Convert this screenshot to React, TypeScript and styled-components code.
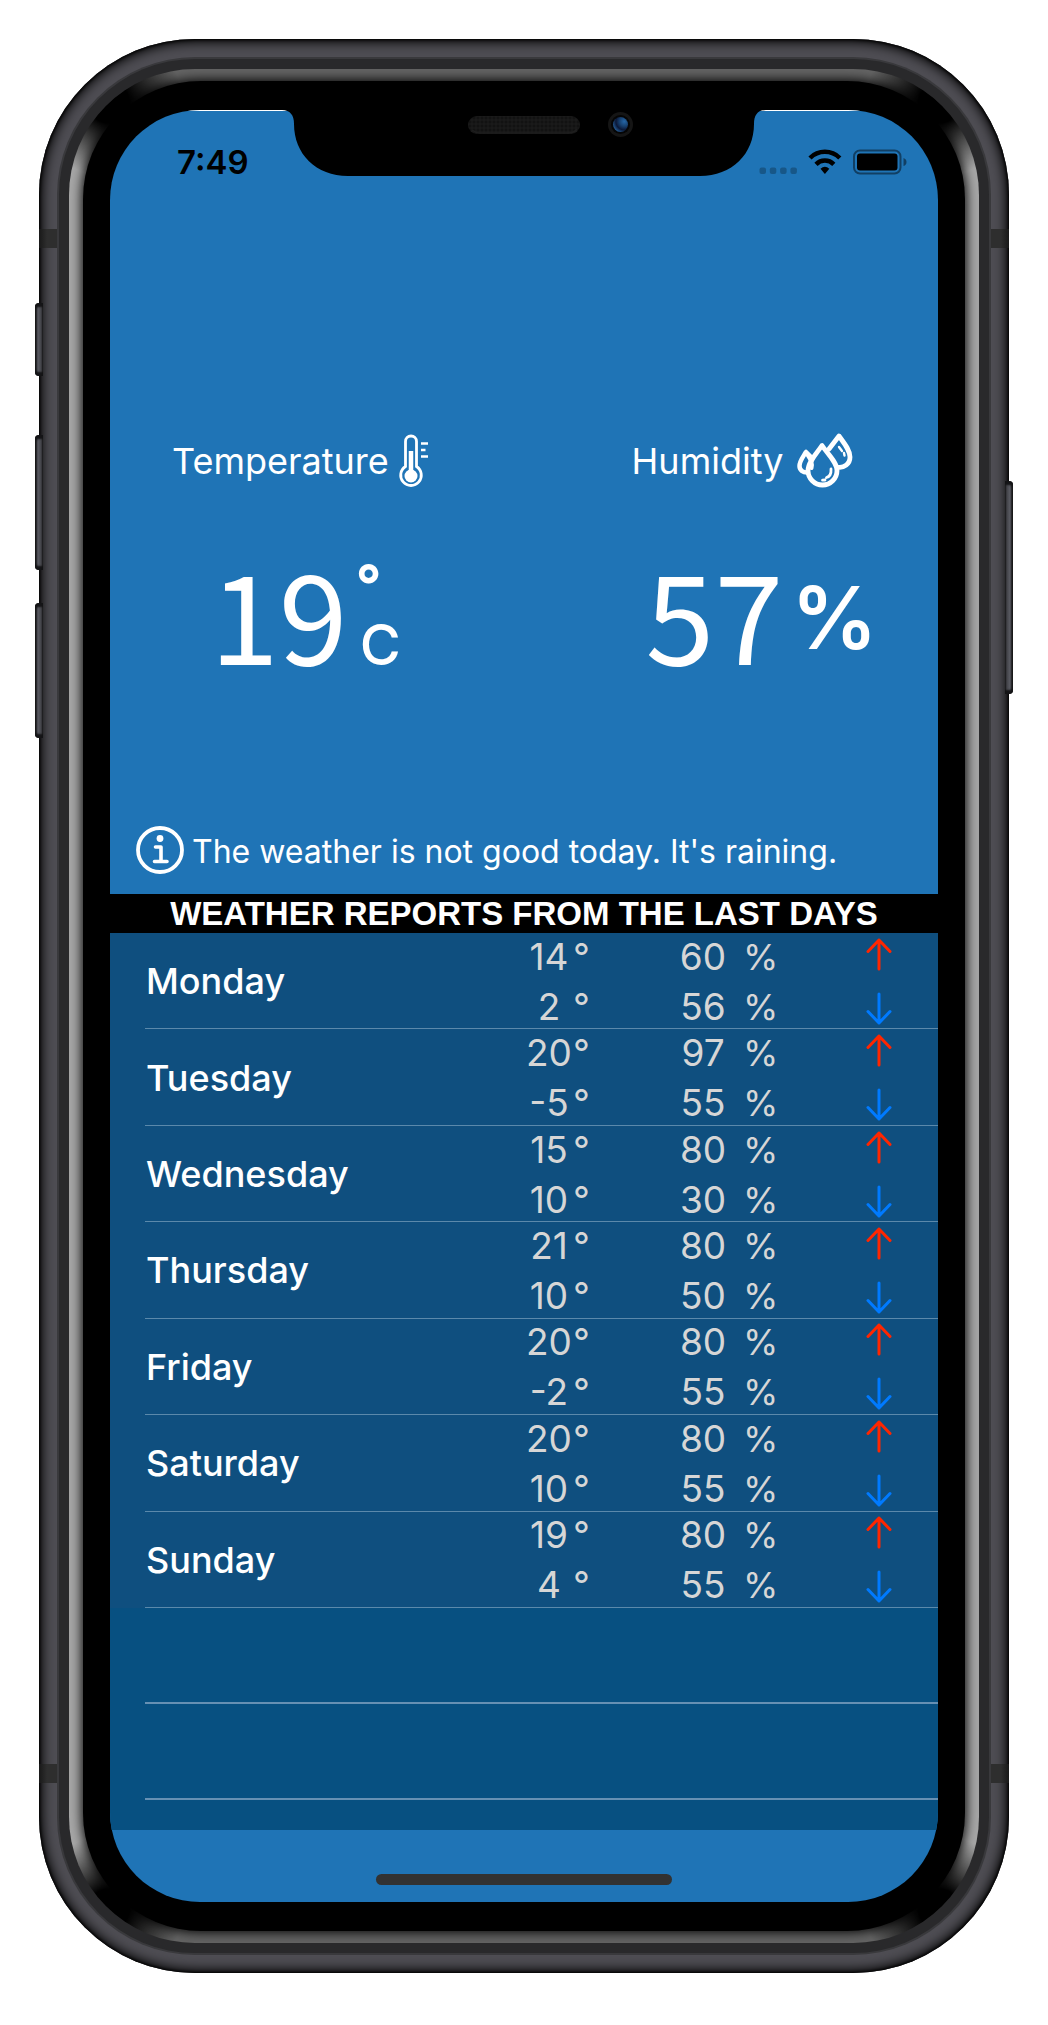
import React from "react";
import styled, { createGlobalStyle } from "styled-components";

const GlobalStyle = createGlobalStyle`
  *, *::before, *::after { box-sizing: border-box; }
  body { margin: 0; background: #fff; font-family: Inter, "Liberation Sans", sans-serif; }
`;

const Page = styled.main`
  display: flex;
  justify-content: center;
  padding: 39px 39px 52px;
`;

/* ---------- device ---------- */

const Phone = styled.div`
  position: relative;
  width: 100%;
  max-width: 970px;
`;

const Frame = styled.div`
  position: relative;
  padding: 20px;
  border-radius: 156px;
  background: #4e4d53;
  box-shadow: inset 0 0 12px 3px #000, inset 0 0 3px 1px #000;
`;

const Rim = styled.div`
  position: relative;
  padding: 10px;
  border-radius: 136px;
  background: #29292b;
  box-shadow: 0 0 0 2px #39393c;
`;

const Metal = styled.div`
  padding: 12px 14px;
  border-radius: 126px;
  overflow: hidden;
  background:
    radial-gradient(circle at 40px 34px, #000 20px, transparent 74px) left top / 116px 116px no-repeat,
    radial-gradient(circle at 76px 34px, #000 20px, transparent 74px) right top / 116px 116px no-repeat,
    radial-gradient(circle at 40px 82px, #000 20px, transparent 74px) left bottom / 116px 116px no-repeat,
    radial-gradient(circle at 76px 82px, #000 20px, transparent 74px) right bottom / 116px 116px no-repeat,
    linear-gradient(#646464, #646464) top / 100% 38px no-repeat,
    linear-gradient(#646464, #646464) bottom / 100% 38px no-repeat,
    #a6a6a6;
`;

const Glass = styled.div`
  padding: 29px 27px;
  border-radius: 118px;
  background: #000;
  box-shadow: 0 0 12px 1px #000;
`;

const Screen = styled.div`
  position: relative;
  display: flex;
  flex-direction: column;
  border-radius: 90px;
  overflow: hidden;
  background: #1f74b6;
  color: #fff;
`;

const SideButton = styled.span<{ $side: "left" | "right"; $top: number; $length: number }>`
  position: absolute;
  top: ${(p) => p.$top}px;
  ${(p) => p.$side}: -4px;
  z-index: 1;
  width: 8px;
  height: ${(p) => p.$length}px;
  border-radius: ${(p) => (p.$side === "left" ? "4px 0 0 4px" : "0 4px 4px 0")};
  background: linear-gradient(
    to ${(p) => (p.$side === "left" ? "right" : "left")},
    #1d1d1f 0 1px, #5a5b63 3px, #4b4c52 5px, #3a3a3f 7px, #1b1b1d 8px
  );
  box-shadow: inset 0 4px 2px #141416, inset 0 -4px 2px #141416;
`;

const Antenna = styled.span<{ $side: "left" | "right"; $edge: "top" | "bottom" }>`
  position: absolute;
  ${(p) => p.$edge}: 190px;
  ${(p) => p.$side}: 0;
  width: 20px;
  height: 19px;
  background: linear-gradient(to ${(p) => (p.$side === "left" ? "right" : "left")}, #181818, #2e2e2e 8px);
`;

const NotchDrawing = styled.svg`
  position: absolute;
  top: 0;
  left: 50%;
  margin-left: -242px;
  width: 484px;
  height: 67px;
`;

function Notch() {
  return (
    <NotchDrawing viewBox="0 0 484 67" aria-hidden="true">
      <defs>
        <pattern id="mesh" width="4" height="4" patternUnits="userSpaceOnUse">
          <rect width="4" height="4" fill="#121212" />
          <path d="M0 2H4M2 0V4" stroke="#1c1c1c" />
        </pattern>
        <radialGradient id="lens" cx="0.75" cy="0.3" r="0.8">
          <stop offset="0" stopColor="#2566a6" />
          <stop offset="0.4" stopColor="#17406f" />
          <stop offset="0.7" stopColor="#0b1838" />
          <stop offset="1" stopColor="#245a92" />
        </radialGradient>
      </defs>
      <path d="M0 0C8 0 12 5 12 14C12 44 34 66 66 66H418C450 66 472 44 472 14C472 5 476 0 484 0Z" fill="#000" />
      <rect x="186" y="6" width="112" height="18" rx="9" fill="url(#mesh)" />
      <path d="M190 20Q194 23 198 23H286Q292 23 295 19" fill="none" stroke="#1e1e1e" strokeWidth="1.5" />
      <circle cx="338.500" cy="14.500" r="12.500" fill="#151515" />
      <circle cx="338.500" cy="14.500" r="9.500" fill="#050505" />
      <circle cx="338.500" cy="14.500" r="7.500" fill="url(#lens)" />
    </NotchDrawing>
  );
}

/* ---------- status bar ---------- */

const StatusBar = styled.header`
  display: flex;
  justify-content: space-between;
  align-items: flex-start;
  height: 80px;
  padding: 32px 31px 0 67px;
  border-top: 1px solid #fff;
  color: #000;
`;

const Clock = styled.time`
  font-size: 33px;
  line-height: 38px;
  font-weight: 600;
`;

const StatusIcons = styled.div`
  display: flex;
  align-items: center;
  height: 38px;
`;

const StatusGlyphs = () => (
  <svg width="148" height="26" viewBox="0 0 148 26" role="img" aria-label="No signal, Wi-Fi, battery full">
    <g fillOpacity="0.25">
      {[0, 10.3, 20.6, 30.9].map((x) => (
        <rect key={x} x={x + 0.5} y="18.500" width="6.500" height="6.500" rx="2" />
      ))}
      <path d="M144.500 9Q147.500 10 147.500 13T144.500 17Z" fillOpacity="0.45" />
    </g>
    <g fill="none" stroke="#000" strokeWidth="4.500">
      <path d="M51 9A21 21 0 0 1 80.800 9" />
      <path d="M57 15.300A12.500 12.500 0 0 1 74.800 15.300" />
    </g>
    <path d="M61.500 19.700Q65.900 16 70.300 19.700L65.900 25Z" />
    <rect x="95" y="1.500" width="46.500" height="23" rx="6" fill="none" stroke="#000" strokeOpacity="0.45" strokeWidth="2" />
    <rect x="98" y="4.500" width="40.500" height="17" rx="3" />
  </svg>
);

/* ---------- current conditions ---------- */

const Today = styled.section`
  display: grid;
  grid-template-columns: 3fr 2fr;
  padding: 244px 0 0 62px;
`;

const StatLabel = styled.h2`
  display: flex;
  align-items: center;
  gap: 12px;
  margin: 0;
  height: 54px;
  font-size: 36px;
  font-weight: 400;
`;

const StatValue = styled.p<{ $indent: number }>`
  display: flex;
  margin: 0;
  padding: 63px 0 0 ${(p) => p.$indent}px;
  height: 210px;
`;

const Digits = styled.span`
  font-family: "Noto Sans CJK SC", "Noto Sans", sans-serif;
  font-size: 124px;
  line-height: 120px;
`;

const CelsiusUnit = styled.span`
  display: flex;
  flex-direction: column;
  align-items: flex-start;
  padding: 4px 0 0 8px;
`;

const Degree = styled.span`
  font-size: 56px;
  line-height: 60px;
  font-weight: 700;
`;

const Scale = styled.span`
  padding-left: 4px;
  font-size: 56px;
  line-height: 60px;
  font-weight: 500;
`;

const Percent = styled.span`
  padding-left: 8px;
  font-size: 86px;
  line-height: 134px;
  font-weight: 600;
`;

const ThermometerIcon = () => (
  <svg width="32" height="54" viewBox="14 0 32 54" fill="none" stroke="#fff" overflow="visible" aria-hidden="true">
    <path d="M18.500 32.500V7.500A5.500 5.500 0 0 1 29.500 7.500V32.500A10.300 10.300 0 1 1 18.500 32.500Z" strokeWidth="2.800" />
    <path d="M24 17V42" strokeWidth="4.500" />
    <circle cx="24" cy="42" r="6.500" fill="#fff" stroke="none" />
    <path d="M34 9.500H41M34 16H38.500M34 22.500H41" strokeWidth="2.400" />
  </svg>
);

const DropsIcon = () => (
  <svg width="58" height="56" viewBox="-2 0 58 56" fill="none" stroke="#fff" strokeLinejoin="round" strokeLinecap="round" aria-hidden="true">
    <path d="M25 12.500C20 20 11 29 11 37.500A14.500 14.500 0 0 0 40 37.500C40 29 30 20 25 12.500Z" strokeWidth="4.800" />
    <path d="M32 16L42 3C47 10 53 17 53 24C53 31 47 35.500 40 34" strokeWidth="4.800" />
    <path d="M15 25L9 19C6 24 2.500 28 2.500 33C2.500 37 6 40 11 39.500" strokeWidth="4.500" />
    <path d="M10 21C13 26 16 29 14.500 35" strokeWidth="4" />
    <path d="M34 36Q34.500 43 29.500 44.500M28 47L25.500 47.200" strokeWidth="2.800" />
    <path d="M42 14L45 18M47 20L47.500 22.500" strokeWidth="2.400" />
  </svg>
);

/* ---------- notice ---------- */

const Notice = styled.p`
  display: flex;
  align-items: flex-start;
  gap: 8px;
  margin: 0;
  padding: 128px 26px 16px;
  font-size: 32px;
  line-height: 52px;
`;

const InfoIcon = () => (
  <svg width="48" height="48" viewBox="0 0 48 48" fill="none" stroke="#fff" aria-hidden="true">
    <circle cx="24" cy="24" r="22" strokeWidth="3.800" />
    <circle cx="24" cy="12.500" r="3.400" fill="#fff" stroke="none" />
    <path d="M19.500 21H25V35.500M18.500 35.500H31" strokeWidth="3.600" strokeLinecap="round" strokeLinejoin="round" />
  </svg>
);

/* ---------- history ---------- */

const ReportTitle = styled.h1`
  margin: 0;
  background: #000;
  font-family: "Liberation Sans", Arial, sans-serif;
  font-size: 33px;
  line-height: 39px;
  font-weight: 700;
  text-align: center;
  white-space: nowrap;
`;

const History = styled.section`
  background: #075081;
`;

const ReportArea = styled.div`
  padding-left: 35px;
  background: #0f4f7f;
`;

const ReportTable = styled.table`
  width: 100%;
  height: 675px;
  table-layout: fixed;
  border-collapse: separate;
  border-spacing: 0;

  tr {
    box-shadow: inset 0 -1px #5b89ab;
  }
`;

const DayColumn = styled.col``;

const ReadingColumn = styled.col`
  width: 154px;
`;

const TrendColumn = styled.col`
  width: 105px;
`;

const DayCell = styled.th`
  padding: 0 0 0 1px;
  font-size: 36px;
  font-weight: 500;
  text-align: left;
`;

const Cell = styled.td<{ $indent?: number }>`
  padding: 0 0 0 ${(p) => p.$indent ?? 0}px;
  color: #d6d6d6;
`;

const Readings = styled.div`
  display: grid;
  gap: 6px;
  padding-top: 1px;
`;

const Reading = styled.div`
  display: flex;
  font-size: 37px;
  line-height: 44px;
`;

const Amount = styled.span`
  display: flex;
  justify-content: center;
  width: 48px;
`;

const PercentSign = styled.span`
  padding-left: 16px;
  font-size: 36px;
`;

const Trend = styled.div`
  display: flex;
  flex-direction: column;
  gap: 21px;
`;

const EmptyRow = styled.div`
  height: 96px;
  margin-left: 35px;
  border-bottom: 2px solid #6690b3;
`;

const Remainder = styled.div`
  height: 30px;
`;

const Footer = styled.footer`
  display: flex;
  justify-content: center;
  align-items: flex-end;
  height: 72px;
  padding-bottom: 17px;
`;

const HomeIndicator = styled.span`
  width: 296px;
  height: 11px;
  border-radius: 6px;
  background: #323232;
`;

const Arrow = ({ up }: { up?: boolean }) => (
  <svg width="26" height="33" viewBox="0 0 26 33" fill="none" strokeWidth="3" strokeLinecap="round" strokeLinejoin="round"
    stroke={up ? "#ff2600" : "#007aff"} role="img" aria-label={up ? "High" : "Low"}>
    <path d={up ? "M13 31V2M2 13.500L13 2L24 13.500" : "M13 2V31M2 19.500L13 31L24 19.500"} />
  </svg>
);

type Pair = [number, number];

const days: { name: string; temperature: Pair; humidity: Pair }[] = [
  { name: "Monday", temperature: [14, 2], humidity: [60, 56] },
  { name: "Tuesday", temperature: [20, -5], humidity: [97, 55] },
  { name: "Wednesday", temperature: [15, 10], humidity: [80, 30] },
  { name: "Thursday", temperature: [21, 10], humidity: [80, 50] },
  { name: "Friday", temperature: [20, -2], humidity: [80, 55] },
  { name: "Saturday", temperature: [20, 10], humidity: [80, 55] },
  { name: "Sunday", temperature: [19, 4], humidity: [80, 55] },
];

export default function App() {
  return (
    <Page>
      <GlobalStyle />
      <Phone>
        <SideButton $side="left" $top={264} $length={73} />
        <SideButton $side="left" $top={396} $length={135} />
        <SideButton $side="left" $top={564} $length={135} />
        <SideButton $side="right" $top={442} $length={213} />
        <Frame>
          <Antenna $side="left" $edge="top" />
          <Antenna $side="right" $edge="top" />
          <Antenna $side="left" $edge="bottom" />
          <Antenna $side="right" $edge="bottom" />
          <Rim>
            <Metal>
              <Glass>
                <Screen>
                  <StatusBar>
                    <Clock>7:49</Clock>
                    <StatusIcons>
                      <StatusGlyphs />
                    </StatusIcons>
                  </StatusBar>
                  <Notch />
                  <Today>
                    <div>
                      <StatLabel>
                        Temperature
                        <ThermometerIcon />
                      </StatLabel>
                      <StatValue $indent={38}>
                        <Digits>19</Digits>
                        <CelsiusUnit>
                          <Degree>°</Degree>
                          <Scale>C</Scale>
                        </CelsiusUnit>
                      </StatValue>
                    </div>
                    <div>
                      <StatLabel>
                        Humidity
                        <DropsIcon />
                      </StatLabel>
                      <StatValue $indent={14}>
                        <Digits>57</Digits>
                        <Percent>%</Percent>
                      </StatValue>
                    </div>
                  </Today>
                  <Notice>
                    <InfoIcon />
                    The weather is not good today. It's raining.
                  </Notice>
                  <ReportTitle id="report-title">WEATHER REPORTS FROM THE LAST DAYS</ReportTitle>
                  <History>
                    <ReportArea>
                      <ReportTable aria-labelledby="report-title">
                        <colgroup>
                          <DayColumn />
                          <ReadingColumn />
                          <ReadingColumn />
                          <TrendColumn />
                        </colgroup>
                        <tbody>
                          {days.map((day) => (
                            <tr key={day.name}>
                              <DayCell scope="row">{day.name}</DayCell>
                              <Cell>
                                <Readings>
                                  {day.temperature.map((value, i) => (
                                    <Reading key={i}>
                                      <Amount>{value}</Amount>°
                                    </Reading>
                                  ))}
                                </Readings>
                              </Cell>
                              <Cell>
                                <Readings>
                                  {day.humidity.map((value, i) => (
                                    <Reading key={i}>
                                      <Amount>{value}</Amount>
                                      <PercentSign>%</PercentSign>
                                    </Reading>
                                  ))}
                                </Readings>
                              </Cell>
                              <Cell $indent={33}>
                                <Trend>
                                  <Arrow up />
                                  <Arrow />
                                </Trend>
                              </Cell>
                            </tr>
                          ))}
                        </tbody>
                      </ReportTable>
                    </ReportArea>
                    <EmptyRow />
                    <EmptyRow />
                    <Remainder />
                  </History>
                  <Footer>
                    <HomeIndicator />
                  </Footer>
                </Screen>
              </Glass>
            </Metal>
          </Rim>
        </Frame>
      </Phone>
    </Page>
  );
}
